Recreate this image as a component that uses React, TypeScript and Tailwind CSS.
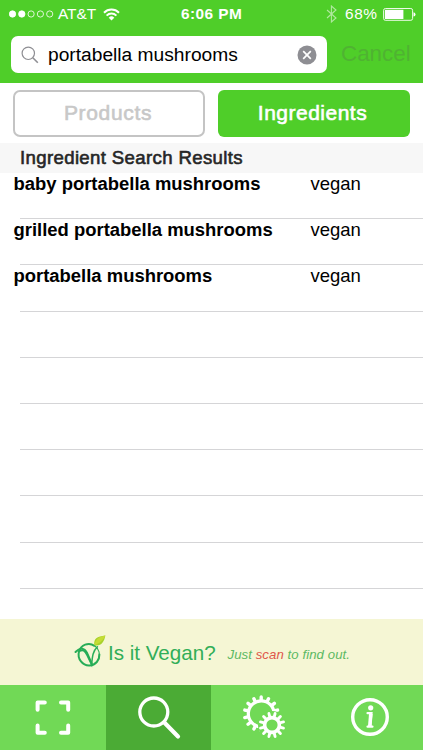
import React from "react";

const results = [
  { name: "baby portabella mushrooms", status: "vegan" },
  { name: "grilled portabella mushrooms", status: "vegan" },
  { name: "portabella mushrooms", status: "vegan" },
  null,
  null,
  null,
  null,
  null,
  null,
];

function StatusBar() {
  return (
    <div className="flex h-7 items-center whitespace-nowrap pl-[9px] text-[15.5px] leading-7 text-white">
      <svg width="45" height="8" viewBox="0 0 45 8" fill="none" stroke="white" strokeWidth="0.8">
        <circle cx="3.5" cy="4" r="3.2" fill="white" />
        <circle cx="12.8" cy="4" r="3.2" fill="white" />
        <circle cx="22.1" cy="4" r="3.1" />
        <circle cx="31.4" cy="4" r="3.1" />
        <circle cx="40.7" cy="4" r="3.1" />
      </svg>
      <span className="ml-1 w-[45px] text-[15.4px]">AT&amp;T</span>
      <svg width="17" height="13" viewBox="0 0 17 13" fill="none" stroke="white" strokeWidth="2">
        <path d="M1 4.7a10.6 10.6 0 0 1 15 0" />
        <path d="M3.6 7.6a6.9 6.9 0 0 1 9.8 0" />
        <path d="M8.5 12.6L5.7 9.7a4 4 0 0 1 5.6 0z" fill="white" stroke="none" />
      </svg>
      <span className="ml-[61px] w-[145px] text-[15.4px] font-bold tracking-[0.45px]">6:06 PM</span>
      <svg width="11" height="18" viewBox="0 0 11 18" fill="none" stroke="white" strokeWidth="1.1" opacity="0.55">
        <path d="M1 5l9 8-4.6 4V1L10 5l-9 8" />
      </svg>
      <span className="ml-[7px] w-[39px] pl-px text-[15.4px] tracking-[0.6px]">68%</span>
      <svg width="34" height="13" viewBox="0 0 34 13">
        <rect x="0.6" y="0.5" width="29" height="11.8" rx="1.8" fill="none" stroke="white" strokeWidth="0.9" />
        <rect x="1.9" y="1.8" width="18.5" height="9.2" fill="white" />
        <path d="M30.5 4.2q2 .4 2 2.2t-2 2.2z" fill="white" />
      </svg>
    </div>
  );
}

function SearchHeader() {
  return (
    <header className="h-[83px] shrink-0 bg-[#4fce29]">
      <StatusBar />
      <div className="flex items-center pl-[11px] pt-2">
        <div className="flex h-[37px] w-[316px] items-center rounded-[7px] bg-white pl-[10px] pr-[10px]">
          <svg width="18" height="18" viewBox="0 0 18 18" fill="none" stroke="#8e8e93" strokeWidth="1.2">
            <circle cx="7.3" cy="7.3" r="6.2" />
            <path d="M11.8 11.8l5 5" strokeWidth="1.6" />
          </svg>
          <span className="ml-[9px] flex-1 whitespace-nowrap text-[19.2px] leading-[36px] text-black">
            portabella mushrooms
          </span>
          <svg width="20" height="20" viewBox="0 0 20 20">
            <circle cx="10" cy="10" r="9.5" fill="#8e8e93" />
            <path d="M6.2 6.2l7.6 7.6M13.8 6.2l-7.6 7.6" stroke="white" strokeWidth="1.7" />
          </svg>
        </div>
        <span className="-mt-0.5 ml-[14px] text-[22.4px] leading-9 text-[#4fb332]">Cancel</span>
      </div>
    </header>
  );
}

function ScopeButtons() {
  return (
    <div className="flex h-[60px] shrink-0 gap-[13px] bg-white pl-[13px] pt-[7px] text-[21px] leading-[28px] tracking-[0.5px] [-webkit-text-stroke:0.6px]">
      <button className="h-[47px] w-[192px] rounded-[7px] border-[2.5px] border-[#c4c4c4] pb-0.5 pr-0.5 tracking-[0.65px] text-[#c8c8c8]">
        Products
      </button>
      <button className="h-[47px] w-[192px] rounded-[6px] bg-[#4fce29] pb-0.5 pr-[3px] text-white">Ingredients</button>
    </div>
  );
}

function ResultList() {
  return (
    <ul className="h-[446px] shrink-0 overflow-hidden">
      {results.map((row, i) => (
        <li key={i} className="flex h-[46.2px] flex-col text-[18.45px] leading-[21px] text-black">
          <div className="flex flex-1 whitespace-nowrap pl-[13.5px]">
            <span className="w-[297px] font-bold">{row?.name}</span>
            <span className="text-[18.5px]">{row?.status}</span>
          </div>
          <div className="ml-5 h-px bg-[#d5d5d7]" />
        </li>
      ))}
    </ul>
  );
}

function VeganLogo() {
  return (
    <svg width="32" height="36" viewBox="0 0 32 36" fill="none" stroke="#27ad57" strokeLinecap="round">
      <path d="M20.5 11.8C14.5 7.7 6.8 11 5 17.5c-2 7.5 3.7 14.4 10.6 14 6-.3 10-5.4 9.8-11" strokeWidth="2" />
      <path d="M1.5 18c4.5-4.8 9-4.1 11.4.7l5 11.2" strokeWidth="2" />
      <path d="M5.3 17.4C9 15 11 17 13 21.3l4.6 9.5c.8-8.4 1.1-13.5 5.8-18" strokeWidth="1.5" />
      <path d="M21 12c4 3 5.6 8.4 3.4 13" strokeWidth="1.1" />
      <path d="M20.4 11.2c-1.2-6.3 2.5-8.8 11-9.7-1.5 7-4.5 11-11 9.7z" fill="#a8d22b" stroke="none" />
      <path d="M20.5 11c1-6 4.5-8.3 10.9-9.5-2.3 4.7-5.2 7.6-10.9 9.5z" fill="#c5dc35" stroke="none" />
    </svg>
  );
}

function Banner() {
  return (
    <div className="flex h-[66px] shrink-0 items-center whitespace-nowrap bg-[#f5f6d4] pl-[74px] text-[#31ae58]">
      <VeganLogo />
      <span className="ml-[2px] w-[119.5px] pt-0.5 text-[20.6px]">Is it Vegan?</span>
      <span className="pt-[5px] text-[13.2px] italic tracking-[0.07px] text-[#5cb963]">
        Just <span className="text-[#df574b]">scan</span> to find out.
      </span>
    </div>
  );
}

function gearTeeth(cx: number, cy: number, inner: number, outer: number, count: number) {
  return Array.from({ length: count }, (_, i) => {
    const a = ((i + 0.5) / count) * Math.PI * 2;
    const c = Math.cos(a);
    const s = Math.sin(a);
    return `M${cx + c * inner} ${cy + s * inner}L${cx + c * outer} ${cy + s * outer}`;
  }).join("");
}

function Gears() {
  return (
    <svg width="46" height="46" viewBox="0 0 46 46" fill="none" stroke="white" strokeLinecap="round">
      <circle cx="20.2" cy="18.8" r="12.9" strokeWidth="3.2" />
      <path d={gearTeeth(20.2, 18.8, 14, 16.8, 14)} strokeWidth="3.4" />
      <circle cx="31" cy="30" r="14" fill="#71d956" stroke="none" />
      <circle cx="31" cy="30" r="7.4" strokeWidth="3.6" />
      <path d={gearTeeth(31, 30, 9, 11.9, 12)} strokeWidth="2.9" />
    </svg>
  );
}

function TabBar() {
  return (
    <nav className="flex h-[65px] shrink-0 bg-[#71d956]">
      <div className="flex w-[106px] items-center justify-center">
        <svg width="36" height="36" viewBox="0 0 36 36" fill="none" stroke="white" strokeWidth="4" strokeLinejoin="round" strokeLinecap="round">
          <path d="M2.6 9.8V2.6H9.8M26 2.6H33.2V9.8M33.2 25.6V32.8H26M9.8 32.8H2.6V25.6" />
        </svg>
      </div>
      <div className="flex w-[105px] items-center justify-center bg-[#4bab35]">
        <svg width="44" height="44" viewBox="0 0 44 44" fill="none" stroke="white" strokeLinecap="round">
          <circle cx="16.8" cy="16" r="14" strokeWidth="3.3" />
          <path d="M27.3 26.6L41 40.4" strokeWidth="4.2" />
        </svg>
      </div>
      <div className="flex w-[106px] items-center justify-center">
        <Gears />
      </div>
      <div className="flex flex-1 items-center justify-center pb-0.5">
        <svg width="40" height="40" viewBox="0 0 40 40" fill="none" stroke="white" strokeWidth="3.4">
          <circle cx="20" cy="20" r="17.3" />
          <circle cx="20.7" cy="10.8" r="2.6" fill="white" stroke="none" />
          <path d="M17.6 16.1h3.8l-1.3 13.3M17.6 29.6h4.8" strokeWidth="2.4" strokeLinecap="round" />
          <path d="M20.8 16.8l-1 12.4" strokeWidth="3.6" />
        </svg>
      </div>
    </nav>
  );
}

export default function App() {
  return (
    <div className="flex h-[750px] w-[423px] flex-col overflow-hidden bg-white font-['Liberation_Sans',Arial,sans-serif]">
      <SearchHeader />
      <ScopeButtons />
      <h2 className="h-[30px] shrink-0 whitespace-nowrap bg-[#f7f7f7] pl-5 text-[18.6px] leading-[30px] tracking-[0.36px] text-[#262626] [-webkit-text-stroke:0.6px]">
        Ingredient Search Results
      </h2>
      <ResultList />
      <Banner />
      <TabBar />
    </div>
  );
}
